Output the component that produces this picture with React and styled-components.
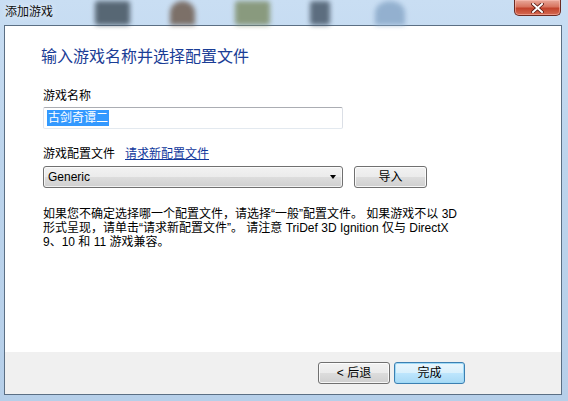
import React from "react";
import styled, { createGlobalStyle } from "styled-components";

const GlobalStyle = createGlobalStyle`
  html, body {
    margin: 0;
    padding: 0;
    background: #b9d1ea;
  }
  * { box-sizing: border-box; }
`;

const UI_FONT = `"Liberation Sans", "Noto Sans CJK SC", sans-serif`;

const Window = styled.div`
  width: 568px;
  height: 401px;
  display: flex;
  flex-direction: column;
  background: linear-gradient(180deg, #c9def3 0%, #bcd4ec 40%, #b6cfe9 100%);
  font-family: ${UI_FONT};
  font-size: 12px;
  color: #000;
  overflow: hidden;
`;

const TitleBar = styled.div`
  height: 25px;
  display: flex;
  align-items: flex-start;
`;

const Title = styled.div`
  padding: 5px 0 0 5px;
  width: 95px;
  line-height: 14px;
  color: #111;
  text-shadow: 0 0 6px rgba(255, 255, 255, 0.9);
`;

const Blurs = styled.div`
  flex: 1;
  display: flex;
  align-items: flex-end;
  height: 25px;
  filter: blur(2.5px);
  opacity: 0.85;
`;

const Blob = styled.div`
  width: ${(p) => p.w}px;
  height: 24px;
  margin-left: ${(p) => p.ml}px;
  background: ${(p) => p.bg};
  border-radius: ${(p) => (p.round ? "50% 50% 0 0" : "3px")};
`;

const CloseBtn = styled.div`
  width: 47px;
  height: 16px;
  margin-right: 7px;
  border: 1px solid #6a2a22;
  border-top: none;
  border-radius: 0 0 5px 5px;
  background: linear-gradient(180deg, #e9a99b 0%, #d8745f 45%, #c2432c 55%, #d56a52 100%);
  box-shadow: inset 0 0 0 1px rgba(255, 200, 190, 0.5);
  display: flex;
  align-items: center;
  justify-content: center;
`;

const Client = styled.div`
  flex: 1;
  margin: 0 6px 6px 4px;
  border: 1px solid #5b6f84;
  display: flex;
  flex-direction: column;
  background: #fff;
`;

const Content = styled.div`
  flex: 1;
  padding: 18px 0 0 36px;
`;

const Heading = styled.h1`
  margin: 0;
  font-family: "Noto Sans CJK SC", sans-serif;
  font-size: 16px;
  font-weight: 400;
  line-height: 22px;
  color: #1a3d96;
`;

const Form = styled.div`
  margin-left: 2px;
  display: flex;
  flex-direction: column;
`;

const Label = styled.div`
  margin-top: ${(p) => p.mt}px;
  line-height: 16px;
  display: flex;
  gap: 10px;
`;

const Link = styled.a`
  color: #10379c;
  text-decoration: underline;
  cursor: pointer;
`;

const TextBox = styled.div`
  margin-top: 3px;
  width: 300px;
  height: 22px;
  border: 1px solid #abadb3;
  border-color: #abadb3 #dbdfe6 #e3e9ef #e2e3ea;
  border-radius: 2px;
  padding: 2px 3px;
  display: flex;
  align-items: center;
`;

const Selected = styled.span`
  background: #3399ff;
  color: #fff;
  line-height: 16px;
  padding: 0 1px;
`;

const Row = styled.div`
  margin-top: 4px;
  display: flex;
  gap: 11px;
`;

const Combo = styled.div`
  width: 300px;
  height: 22px;
  border: 1px solid #707070;
  border-radius: 3px;
  background: linear-gradient(180deg, #f2f2f2 0%, #ebebeb 49%, #dddddd 50%, #cfcfcf 100%);
  box-shadow: inset 0 0 0 1px rgba(255, 255, 255, 0.7);
  display: flex;
  align-items: center;
  justify-content: space-between;
  padding: 0 6px 0 4px;
`;

const Arrow = styled.span`
  width: 0;
  height: 0;
  border-left: 3.5px solid transparent;
  border-right: 3.5px solid transparent;
  border-top: 4px solid #000;
`;

const Button = styled.div`
  width: ${(p) => p.w}px;
  height: 22px;
  border: 1px solid ${(p) => (p.primary ? "#3c7fb1" : "#707070")};
  border-radius: 3px;
  background: ${(p) =>
    p.primary
      ? "linear-gradient(180deg, #eaf6fd 0%, #d9f0fc 49%, #bee6fd 50%, #a7d9f5 100%)"
      : "linear-gradient(180deg, #f2f2f2 0%, #ebebeb 49%, #dddddd 50%, #cfcfcf 100%)"};
  box-shadow: inset 0 0 0 1px ${(p) => (p.primary ? "#9fdaf7" : "rgba(255,255,255,0.8)")};
  display: flex;
  align-items: center;
  justify-content: center;
  line-height: 14px;
`;

const Help = styled.p`
  margin: 19px 0 0 0;
  line-height: 14px;
  width: 430px;
`;

const Footer = styled.div`
  height: 42px;
  background: #f0f0f0;
  display: flex;
  justify-content: flex-end;
  align-items: flex-start;
  gap: 4px;
  padding: 10px 96px 0 0;
`;

export default function App() {
  return (
    <>
      <GlobalStyle />
      <Window>
        <TitleBar>
          <Title>添加游戏</Title>
          <Blurs>
            <Blob w={35} ml={0} bg="#44535f" />
            <Blob w={25} ml={40} bg="#6f5d50" round />
            <Blob w={35} ml={40} bg="#7f8f6a" />
            <Blob w={20} ml={40} bg="#4a5a6b" />
            <Blob w={30} ml={45} bg="#8aa9c9" round />
          </Blurs>
          <CloseBtn>
            <svg width="13" height="10" viewBox="0 0 13 10">
              <path d="M2 1 L11 9 M11 1 L2 9" stroke="#5a1a12" strokeWidth="3.6" strokeLinecap="square" />
              <path d="M2 1 L11 9 M11 1 L2 9" stroke="#fff" strokeWidth="2" strokeLinecap="square" />
            </svg>
          </CloseBtn>
        </TitleBar>
        <Client>
          <Content>
            <Heading>输入游戏名称并选择配置文件</Heading>
            <Form>
              <Label mt={22}>游戏名称</Label>
              <TextBox>
                <Selected>古剑奇谭二</Selected>
              </TextBox>
              <Label mt={17}>
                <span>游戏配置文件</span>
                <Link>请求新配置文件</Link>
              </Label>
              <Row>
                <Combo>
                  <span>Generic</span>
                  <Arrow />
                </Combo>
                <Button w={73}>导入</Button>
              </Row>
              <Help>
                如果您不确定选择哪一个配置文件，请选择“一般”配置文件。 如果游戏不以 3D
                <br />
                形式呈现，请单击“请求新配置文件”。 请注意 TriDef 3D Ignition 仅与 DirectX
                <br />
                9、10 和 11 游戏兼容。
              </Help>
            </Form>
          </Content>
          <Footer>
            <Button w={72}>&lt; 后退</Button>
            <Button w={71} primary>完成</Button>
          </Footer>
        </Client>
      </Window>
    </>
  );
}
